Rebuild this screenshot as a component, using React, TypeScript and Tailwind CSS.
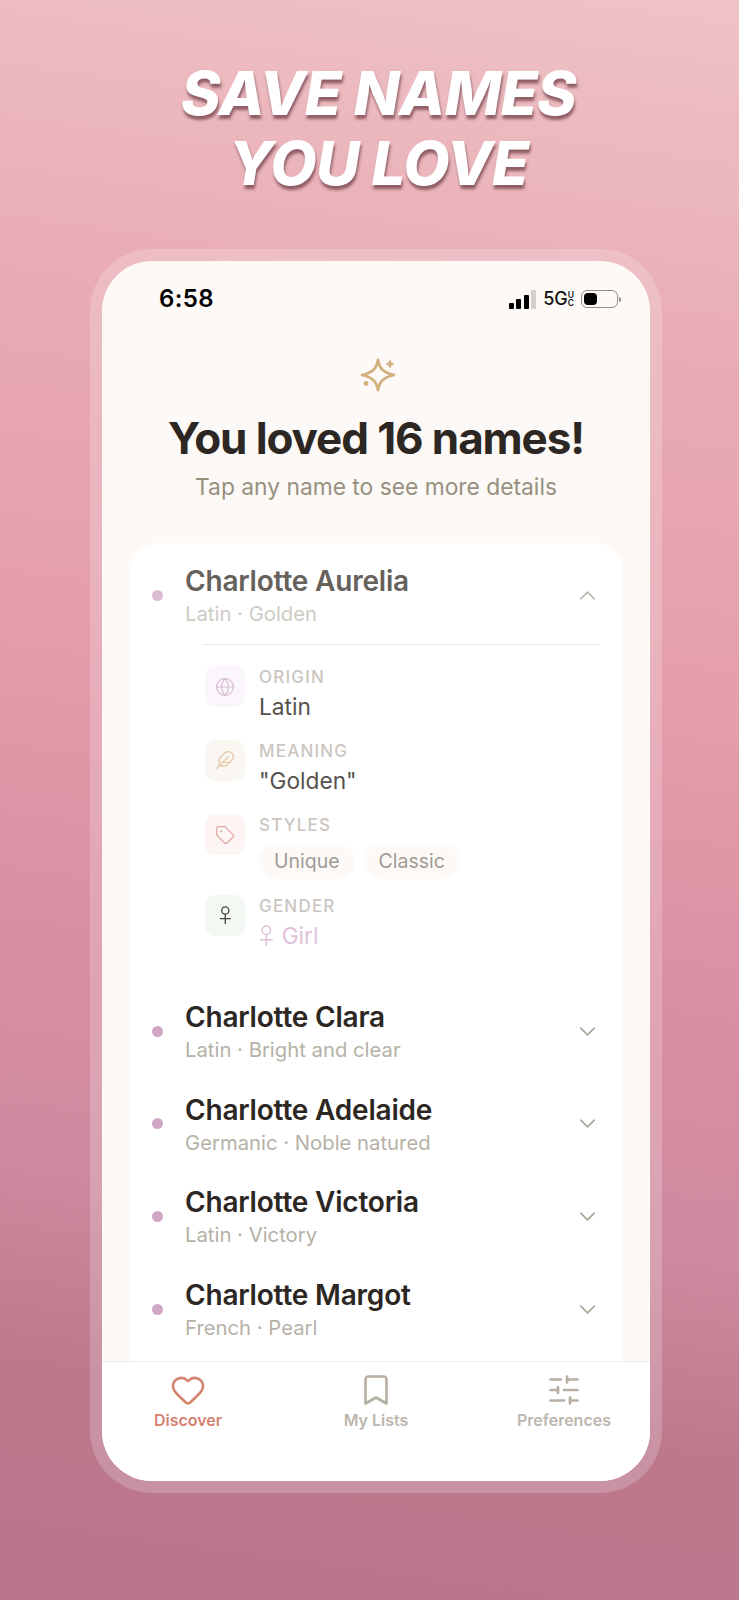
import React from 'react';
import { Bookmark, ChevronDown, ChevronUp, Feather, Globe, Heart, SlidersHorizontal, Tag } from 'lucide-react';

const collapsedNames = [
    { name: 'Charlotte Clara', sub: 'Latin · Bright and clear' },
    { name: 'Charlotte Adelaide', sub: 'Germanic · Noble natured' },
    { name: 'Charlotte Victoria', sub: 'Latin · Victory' },
    { name: 'Charlotte Margot', sub: 'French · Pearl' },
];

const StatusBar = () => (
    <div className="flex items-center justify-between pl-[57px] pr-[29px] pt-[2px] h-[74px] shrink-0">
        <span className="text-[24px] font-semibold text-black tracking-[0.4px]">6:58</span>
        <div className="flex items-center">
            <div className="flex items-end gap-[2.500px] h-[19px]">
                <span className="w-[5px] h-[6px] rounded-[1px] bg-black" />
                <span className="w-[5px] h-[10px] rounded-[1px] bg-black" />
                <span className="w-[5px] h-[14px] rounded-[1px] bg-black" />
                <span className="w-[5px] h-[19px] rounded-[1px] bg-[#d4d0ce]" />
            </div>
            <span className="ml-[7px] text-[18px] font-medium text-[#111] leading-none">5G</span>
            <span className="flex flex-col text-[8.500px] font-semibold leading-[8px] text-[#111]">
                <span>U</span>
                <span>C</span>
            </span>
            <div className="ml-[7px] w-[37px] h-[18px] rounded-[6px] border border-[#8f8b89] p-[2px]">
                <div className="w-[13px] h-full rounded-[4px] bg-black" />
            </div>
            <span className="ml-[1px] w-[2px] h-[5px] rounded-r-sm bg-[#8f8b89]" />
        </div>
    </div>
);

const Sparkle = () => (
    <svg width="40" height="40" viewBox="0 0 40 40" fill="none" stroke="#d3b07f" strokeWidth="2.8" strokeLinejoin="round">
        <path d="M22 5c1.500 8.500 5 12.500 16 15c-11 2.500-14.500 6.500-16 15c-1.500-8.500-5-12.500-16-15c11-2.500 14.500-6.500 16-15z" />
        <path d="M34 5.500v7M30.500 9h7" strokeWidth="2.600" />
        <circle cx="10" cy="28.500" r="2.400" fill="#d3b07f" stroke="none" />
    </svg>
);

const FemaleSign = ({ color, height }: { color: string; height: number }) => (
    <svg width={(height * 14) / 20} height={height} viewBox="0 0 14 20" fill="none" stroke={color} strokeWidth="1.500">
        <circle cx="7" cy="5" r="4" />
        <path d="M7 9v11M1 14h12" />
    </svg>
);

const DetailRow = ({ icon, tint, label, children, gap }: { icon: React.ReactNode; tint: string; label: string; children: React.ReactNode; gap: string }) => (
    <div className={`flex gap-[14px] ${gap}`}>
        <div className={`w-[40px] h-[41px] shrink-0 rounded-[10px] flex items-center justify-center ${tint}`}>{icon}</div>
        <div className="min-w-0 -mt-[1px]">
            <div className="text-[17px] leading-[24px] font-medium tracking-[1.200px] text-[#cbc6c1]">{label}</div>
            {children}
        </div>
    </div>
);

const NameRow = ({ name, sub }: { name: string; sub: string }) => (
    <div className="h-[92.600px] flex items-center pl-[22px] pr-[22.500px] shrink-0">
        <span className="w-[11px] h-[11px] rounded-full bg-[#d0a8c6] shrink-0" />
        <div className="ml-[22px] flex-1 mt-[1px]">
            <div className="text-[28px] leading-[37px] font-semibold tracking-[-0.2px] text-[#2c2722]">{name}</div>
            <div className="text-[20.300px] leading-[28px] text-[#b6b1a6]">{sub}</div>
        </div>
        <ChevronDown size={27} strokeWidth={1.35} color="#a8a298" />
    </div>
);

const Tab = ({ icon, label, active }: { icon: React.ReactNode; label: string; active?: boolean }) => (
    <div className="flex flex-col items-center">
        {icon}
        <span className={`mt-[2px] text-[16px] leading-[20px] font-semibold ${active ? 'text-[#d4806f]' : 'text-[#bdb6ad]'}`}>{label}</span>
    </div>
);

const App: React.FC = () => {
    return (
        <div className="w-[739px] h-[1600px] overflow-hidden flex flex-col items-center font-[Inter,sans-serif] bg-[linear-gradient(188deg,#eec3c7_0%,#e9adb5_20%,#e59fac_40%,#d98fa3_60%,#cf8a9f_74%,#bd788c_86%,#b9758a_100%)]">
            <h1 className="mt-[58px] ml-[18px] text-center text-[60px] leading-[70px] font-extrabold italic tracking-[-0.6px] text-white [text-shadow:1px_4px_3px_rgba(95,45,55,0.65)]">
                SAVE NAMES
                <br />
                YOU LOVE
            </h1>

            <div className="mt-[51px] self-start ml-[90px] w-[572px] h-[1244px] rounded-[62px] bg-white/20 p-[12px] shrink-0">
                <div className="h-full rounded-[50px] overflow-hidden bg-[#fcf9f6] flex flex-col">
                    <StatusBar />

                    <div className="flex-1 min-h-0 overflow-hidden flex flex-col items-center">
                        <div className="mt-[20px]">
                            <Sparkle />
                        </div>
                        <h2 className="mt-[17px] text-[44px] leading-[52px] font-bold tracking-[-1.100px] text-[#2c2722]">You loved 16 names!</h2>
                        <p className="mt-[7px] text-[22.800px] leading-[32px] text-[#97907f]">Tap any name to see more details</p>

                        <div className="mt-[40px] w-[493px] flex-1 self-start ml-[28px] rounded-t-[28px] bg-white flex flex-col">
                            <div className="h-[101px] pt-[3px] flex items-center pl-[22px] pr-[22.500px]">
                                <span className="w-[11px] h-[11px] rounded-full bg-[#d9bcd2] shrink-0" />
                                <div className="ml-[22px] flex-1 mt-[1px]">
                                    <div className="text-[28px] leading-[37px] font-semibold tracking-[-0.2px] text-[#66615b]">Charlotte Aurelia</div>
                                    <div className="text-[20.300px] leading-[28px] text-[#cfcac3]">Latin · Golden</div>
                                </div>
                                <ChevronUp size={27} strokeWidth={1.35} color="#bdb8b0" />
                            </div>

                            <div className="ml-[73px] mr-[23px] border-t border-[#eeeae8]" />

                            <div className="ml-[75px] pt-[21px] h-[340px]">
                                <DetailRow gap="mb-[14.500px]" tint="bg-[#fbf6fb]" label="ORIGIN" icon={<Globe size={20} strokeWidth={1.4} color="#d7b9d1" />}>
                                    <div className="text-[22.700px] leading-[36px] text-[#55514d]">Latin</div>
                                </DetailRow>
                                <DetailRow gap="mb-[15.500px]" tint="bg-[#faf6f2]" label="MEANING" icon={<Feather size={20} strokeWidth={1.4} color="#e3c49f" />}>
                                    <div className="text-[22.700px] leading-[36px] text-[#55514d]">"Golden"</div>
                                </DetailRow>
                                <DetailRow gap="mb-[15.500px]" tint="bg-[#fcf5f3]" label="STYLES" icon={<Tag size={20} strokeWidth={1.5} color="#dfaaa4" />}>
                                    <div className="mt-[7px] flex gap-[9px]">
                                        <span className="h-[35px] px-[15px] rounded-full bg-[#fcf9f7] flex items-center text-[19.500px] text-[#a09b95]">Unique</span>
                                        <span className="h-[35px] px-[15px] rounded-full bg-[#fcf9f7] flex items-center text-[19.500px] text-[#a09b95]">Classic</span>
                                    </div>
                                </DetailRow>
                                <DetailRow gap="" tint="bg-[#f3f8f3]" label="GENDER" icon={<FemaleSign color="#4a4744" height={18} />}>
                                    <div className="flex items-center gap-[8px] h-[36px] text-[22.700px] leading-[36px] text-[#dfc3d8]">
                                        <FemaleSign color="#dfc3d8" height={21} />
                                        Girl
                                    </div>
                                </DetailRow>
                            </div>

                            {collapsedNames.map(n => (
                                <NameRow key={n.name} name={n.name} sub={n.sub} />
                            ))}
                        </div>
                    </div>

                    <div className="h-[120px] shrink-0 bg-white border-t border-[#f0edea] pt-[10px]">
                        <div className="grid grid-cols-3 -mx-2">
                            <Tab active label="Discover" icon={<Heart size={36} strokeWidth={1.75} color="#d58470" />} />
                            <Tab label="My Lists" icon={<Bookmark size={36} strokeWidth={1.75} color="#b7afa5" />} />
                            <Tab label="Preferences" icon={<SlidersHorizontal size={36} strokeWidth={1.75} color="#b7afa5" />} />
                        </div>
                    </div>
                </div>
            </div>
        </div>
    );
};

export default App;
